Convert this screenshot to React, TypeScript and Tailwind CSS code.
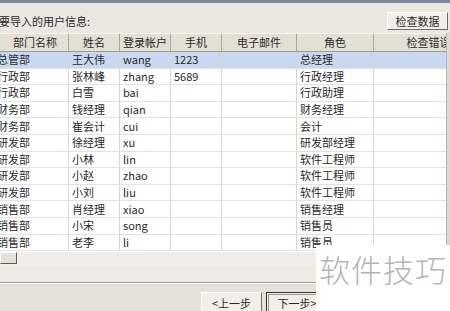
import React from 'react';

const cols = ['部门名称', '姓名', '登录帐户', '手机', '电子邮件', '角色', '检查错误'];

const rows: string[][] = [
  ['总管部', '王大伟', 'wang', '1223', '', '总经理', ''],
  ['行政部', '张林峰', 'zhang', '5689', '', '行政经理', ''],
  ['行政部', '白雪', 'bai', '', '', '行政助理', ''],
  ['财务部', '钱经理', 'qian', '', '', '财务经理', ''],
  ['财务部', '崔会计', 'cui', '', '', '会计', ''],
  ['研发部', '徐经理', 'xu', '', '', '研发部经理', ''],
  ['研发部', '小林', 'lin', '', '', '软件工程师', ''],
  ['研发部', '小赵', 'zhao', '', '', '软件工程师', ''],
  ['研发部', '小刘', 'liu', '', '', '软件工程师', ''],
  ['销售部', '肖经理', 'xiao', '', '', '销售经理', ''],
  ['销售部', '小宋', 'song', '', '', '销售员', ''],
  ['销售部', '老李', 'li', '', '', '销售员', ''],
];

const gridCols = 'grid grid-cols-[75px_51px_51px_51px_75px_77px_110px]';

export default function App() {
  return (
    <div
      className="relative w-[450px] h-[311px] overflow-hidden bg-[#e9e7df] text-[11px] text-[#2a2a2a]"
      style={{ fontFamily: '"Noto Sans CJK SC", "Liberation Sans", sans-serif' }}
    >
      <div className="h-[3px] bg-[#7f8ca0]" />

      {/* label + check button */}
      <div className="h-[30px] flex items-center justify-between pt-[6px] pr-[2px]">
        <span className="ml-[-1px] leading-none">要导入的用户信息:</span>
        <button className="w-[61px] h-[18px] bg-[#f1efe8] border border-t-white border-l-white border-r-[#6f6d66] border-b-[#6f6d66] leading-none text-[11px]">
          检查数据
        </button>
      </div>

      {/* table */}
      <div className="flex h-[219px]">
        <div className="w-[452px] ml-[-6px] overflow-hidden bg-white">
          <div className={`${gridCols} h-[19px] bg-[#e2dfd4] border-b border-[#a09e94]`}>
            {cols.map((c, i) => (
              <div
                key={c}
                className={`flex items-center justify-center border-r border-[#a9a79d] border-t border-t-[#f6f5f0] leading-none ${i === 0 ? 'pl-[8px]' : ''}`}
              >
                {c}
              </div>
            ))}
          </div>
          {rows.map((r, ri) => (
            <div
              key={ri}
              className={`${gridCols} h-[16.6px] ${ri === 0 ? 'bg-[#c8d8ee]' : 'bg-white'}`}
            >
              {r.map((v, ci) => (
                <div
                  key={ci}
                  className="flex items-center pl-[3px] border-r border-b border-r-[#d6d6d6] border-b-[#e2e2e2] leading-none whitespace-nowrap overflow-hidden"
                >
                  {v}
                </div>
              ))}
            </div>
          ))}
        </div>
        <div className="w-[4px] bg-[#dcdad2] border-l border-[#b8b6ae]" />
      </div>

      {/* horizontal scrollbar */}
      <div className="h-[14px] flex items-start bg-[#efeee8]">
        <div className="w-[17px] h-[12px] bg-[#e4e2da] border border-t-white border-l-white border-r-[#5f5d57] border-b-[#5f5d57]" />
      </div>

      {/* band + separator */}
      <div className="h-[17px] bg-[#ecebe4] border-b border-b-[#9c9a93]" />

      {/* wizard buttons */}
      <div className="flex pl-[201px] pt-[8px] gap-[4px] bg-[#e3e1da] h-[28px] border-t border-white">
        <button className="w-[61px] h-[22px] bg-[#f1efe8] border border-t-white border-l-white border-r-[#6f6d66] border-b-[#6f6d66] leading-none text-[11px]">
          &lt;上一步
        </button>
        <button className="w-[62px] h-[22px] bg-[#f1efe8] border border-[#2f2f2f] outline-1 outline-[#9a988f] -outline-offset-[3px] leading-none text-[11px]">
          下一步&gt;
        </button>
      </div>

      {/* watermark */}
      <div className="absolute left-[316px] top-[245px] w-[134px] h-[66px] bg-white flex items-start justify-center pt-[8px]">
        <span
          className="text-[31px] leading-none text-[#b4b4b4] tracking-[1px]"
          style={{ fontFamily: '"Noto Sans CJK SC", sans-serif', fontWeight: 300 }}
        >
          软件技巧
        </span>
      </div>
    </div>
  );
}
